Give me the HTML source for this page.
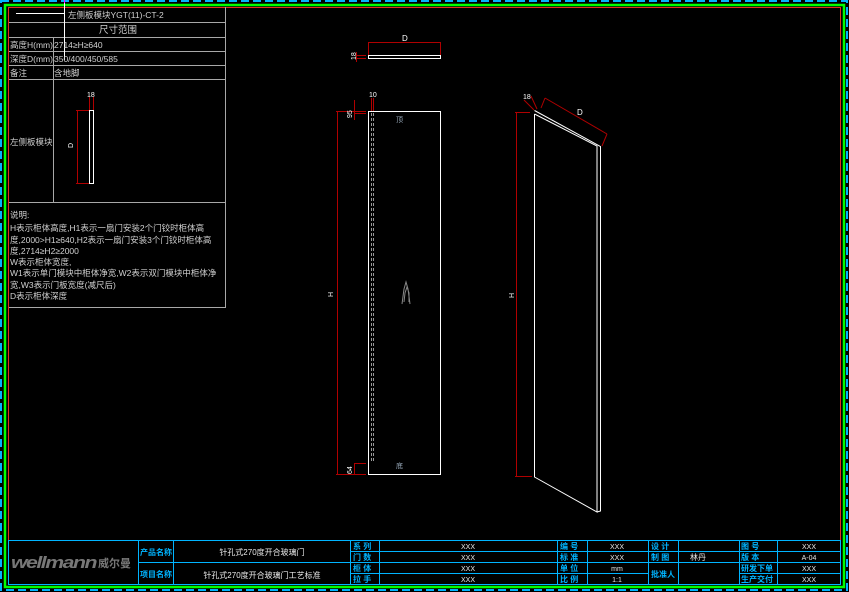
<!DOCTYPE html>
<html><head><meta charset="utf-8"><style>
html,body{margin:0;padding:0;background:#000;width:849px;height:592px;overflow:hidden}
svg{display:block}
text{font-family:"Liberation Sans","Noto Sans CJK SC",sans-serif}
</style></head><body>
<svg width="849" height="592" viewBox="0 0 849 592" xmlns="http://www.w3.org/2000/svg">
<rect width="849" height="592" fill="#000"/>
<rect x="1" y="1" width="846" height="589" fill="none" stroke="#00b4ff" stroke-width="2" stroke-dasharray="8,4"/>
<rect x="5" y="5" width="839" height="582" fill="none" stroke="#00ff00" stroke-width="2.5"/>
<rect x="8.5" y="7.5" width="832" height="577" fill="none" stroke="#e03020" stroke-width="1"/>

<g stroke="#a8a8a8" stroke-width="1" fill="none">
<line x1="9" y1="22.5" x2="226" y2="22.5"/>
<line x1="9" y1="37.5" x2="226" y2="37.5"/>
<line x1="9" y1="51.5" x2="226" y2="51.5"/>
<line x1="9" y1="65.5" x2="226" y2="65.5"/>
<line x1="9" y1="79.5" x2="226" y2="79.5"/>
<line x1="9" y1="202.5" x2="226" y2="202.5"/>
<line x1="9" y1="307.5" x2="226" y2="307.5"/>
<line x1="225.5" y1="7" x2="225.5" y2="308"/>
<line x1="53.5" y1="37" x2="53.5" y2="202"/>
</g>
<line x1="16" y1="13.5" x2="64" y2="13.5" stroke="#fff"/>
<line x1="64.5" y1="0" x2="64.5" y2="60" stroke="#fff"/>
<line x1="64.5" y1="0" x2="64.5" y2="3" stroke="#ff00ff"/>
<g fill="#d0d0d0" font-size="8.5">
<text x="68" y="18">左侧板模块YGT(11)-CT-2</text>
<text x="99" y="33" font-size="9.5">尺寸范围</text>
<text x="10" y="48">高度H(mm)</text>
<text x="54" y="48">2714≥H≥640</text>
<text x="10" y="62">深度D(mm)</text>
<text x="54" y="62">350/400/450/585</text>
<text x="10" y="76">备注</text>
<text x="54" y="76">含地脚</text>
<text x="10" y="145">左侧板模块</text>
<text x="10" y="218">说明:</text>
<text x="10" y="231">H表示柜体高度,H1表示一扇门安装2个门铰时柜体高</text>
<text x="10" y="243">度,2000&gt;H1≥640,H2表示一扇门安装3个门铰时柜体高</text>
<text x="10" y="254">度,2714≥H2≥2000</text>
<text x="10" y="265">W表示柜体宽度,</text>
<text x="10" y="276">W1表示单门模块中柜体净宽,W2表示双门模块中柜体净</text>
<text x="10" y="288">宽,W3表示门板宽度(减尺后)</text>
<text x="10" y="299">D表示柜体深度</text>
</g>
<rect x="89.5" y="110.5" width="4" height="73" fill="none" stroke="#fff"/>
<g stroke="#b00000"><line x1="77.5" y1="110" x2="77.5" y2="184"/><line x1="76" y1="110.5" x2="89" y2="110.5"/><line x1="76" y1="183.5" x2="89" y2="183.5"/><line x1="89.5" y1="97" x2="89.5" y2="110"/><line x1="93.5" y1="97" x2="93.5" y2="110"/></g>
<text x="87" y="97" fill="#fff" font-size="7">18</text>
<text x="73" y="148" fill="#fff" font-size="7" transform="rotate(-90 73 148)">D</text>

<rect x="368.5" y="55.5" width="72" height="3" fill="none" stroke="#fff"/>
<g stroke="#b00000"><line x1="368" y1="42.5" x2="441" y2="42.5"/><line x1="368.5" y1="42" x2="368.5" y2="55"/><line x1="440.5" y1="42" x2="440.5" y2="55"/><line x1="356" y1="55.5" x2="366" y2="55.5"/><line x1="356" y1="58.5" x2="366" y2="58.5"/><line x1="356.5" y1="52" x2="356.5" y2="62"/></g>
<text x="402" y="41" fill="#fff" font-size="8">D</text>
<text x="356" y="60" fill="#fff" font-size="7" transform="rotate(-90 356 60)">18</text>

<rect x="368.5" y="111.5" width="72" height="363" fill="none" stroke="#fff"/>
<line x1="371.5" y1="113" x2="371.5" y2="463" stroke="#999" stroke-dasharray="3,2"/>
<line x1="373.5" y1="113" x2="373.5" y2="463" stroke="#999" stroke-dasharray="3,2"/>
<g stroke="#b00000"><line x1="337.5" y1="111" x2="337.5" y2="475"/><line x1="336" y1="111.5" x2="366" y2="111.5"/><line x1="336" y1="474.5" x2="366" y2="474.5"/><line x1="354.5" y1="100" x2="354.5" y2="120"/><line x1="354" y1="113.5" x2="366" y2="113.5"/><line x1="354.5" y1="463" x2="354.5" y2="475"/><line x1="354" y1="463.5" x2="366" y2="463.5"/><line x1="371.5" y1="98" x2="371.5" y2="111"/><line x1="373.5" y1="98" x2="373.5" y2="111"/></g>
<text x="369" y="97" fill="#fff" font-size="7">10</text>
<text x="352" y="118" fill="#fff" font-size="7" transform="rotate(-90 352 118)">95</text>
<text x="352" y="474" fill="#fff" font-size="7" transform="rotate(-90 352 474)">64</text>
<text x="333" y="297" fill="#fff" font-size="7" transform="rotate(-90 333 297)">H</text>
<text x="396" y="122" fill="#9ab" font-size="7">顶</text>
<text x="396" y="468" fill="#9ab" font-size="7">底</text>
<path d="M402 304 L404 289 L406 282 L408 289 L410 304 M404 302 L405 293 L407 287 L409 293 L409 302" stroke="#888" fill="none"/>

<g stroke="#fff" fill="none">
<path d="M534.5 114 L534.5 477 L597 512 L597 146 L534.5 114"/>
<path d="M534.5 110.5 L600.5 146.5 L600.5 511 L597 512"/>
</g>
<g stroke="#b00000" fill="none"><line x1="516.5" y1="113" x2="516.5" y2="477"/><line x1="515" y1="112.5" x2="530" y2="112.5"/><line x1="515" y1="476.5" x2="532" y2="476.5"/><line x1="541" y1="108" x2="545" y2="98"/><line x1="545" y1="98" x2="607" y2="134"/><line x1="607" y1="134" x2="602" y2="146"/><line x1="524" y1="100" x2="534" y2="110"/><line x1="531" y1="96" x2="537" y2="109"/></g>
<text x="577" y="115" fill="#fff" font-size="8">D</text>
<text x="523" y="99" fill="#fff" font-size="7">18</text>
<text x="514" y="298" fill="#fff" font-size="7" transform="rotate(-90 514 298)">H</text>

<g stroke="#00b4ff" stroke-width="1" fill="none">
<rect x="8.5" y="540.5" width="832" height="44"/>
<line x1="138.5" y1="562.5" x2="350" y2="562.5"/>
<line x1="350" y1="551.5" x2="841" y2="551.5"/>
<line x1="350" y1="562.5" x2="841" y2="562.5"/>
<line x1="350" y1="573.5" x2="648" y2="573.5"/>
<line x1="739" y1="573.5" x2="841" y2="573.5"/>
<line x1="138.5" y1="540" x2="138.5" y2="585"/>
<line x1="173.5" y1="540" x2="173.5" y2="585"/>
<line x1="350.5" y1="540" x2="350.5" y2="585"/>
<line x1="379.5" y1="540" x2="379.5" y2="585"/>
<line x1="557.5" y1="540" x2="557.5" y2="585"/>
<line x1="587.5" y1="540" x2="587.5" y2="585"/>
<line x1="648.5" y1="540" x2="648.5" y2="585"/>
<line x1="678.5" y1="540" x2="678.5" y2="585"/>
<line x1="739.5" y1="540" x2="739.5" y2="585"/>
<line x1="777.5" y1="540" x2="777.5" y2="585"/>
</g>
<text x="11" y="568" fill="#777" font-size="17" font-weight="bold" font-style="italic" letter-spacing="-1.2" textLength="85" lengthAdjust="spacingAndGlyphs">wellmann</text>
<text x="98" y="567" fill="#777" font-size="11" font-weight="bold">威尔曼</text>
<g fill="#00b4ff" font-size="8" font-weight="bold">
<text x="140" y="555">产品名称</text>
<text x="140" y="577">项目名称</text>
<text x="353" y="549">系 列</text>
<text x="353" y="560">门 数</text>
<text x="353" y="571">柜 体</text>
<text x="353" y="582">拉 手</text>
<text x="560" y="549">编 号</text>
<text x="560" y="560">标 准</text>
<text x="560" y="571">单 位</text>
<text x="560" y="582">比 例</text>
<text x="651" y="549">设 计</text>
<text x="651" y="560">制 图</text>
<text x="651" y="577">批准人</text>
<text x="741" y="549">图 号</text>
<text x="741" y="560">版 本</text>
<text x="741" y="571">研发下单</text>
<text x="741" y="582">生产交付</text>
</g>
<g fill="#e8e8e8" font-size="7" text-anchor="middle">
<text x="262" y="555" font-size="8">针孔式270度开合玻璃门</text>
<text x="262" y="578" font-size="8">针孔式270度开合玻璃门工艺标准</text>
<text x="468" y="549">XXX</text><text x="468" y="560">XXX</text><text x="468" y="571">XXX</text><text x="468" y="582">XXX</text>
<text x="617" y="549">XXX</text><text x="617" y="560">XXX</text><text x="617" y="571">mm</text><text x="617" y="582">1:1</text>
<text x="698" y="560" font-size="8">林丹</text>
<text x="809" y="549">XXX</text><text x="809" y="560">A-04</text><text x="809" y="571">XXX</text><text x="809" y="582">XXX</text>
</g>
</svg>
</body></html>
